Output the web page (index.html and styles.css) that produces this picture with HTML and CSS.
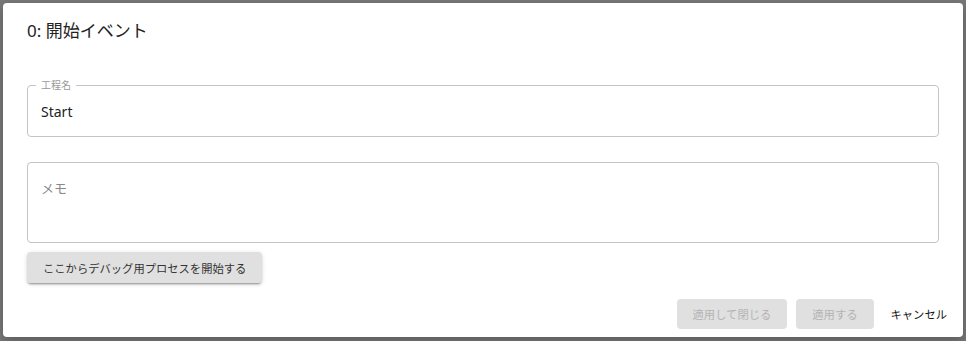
FILE: index.html
```html
<!DOCTYPE html>
<html lang="ja">
<head>
    <meta charset="UTF-8">
    <meta name="viewport" content="width=device-width, initial-scale=1.0">
    <title>開始イベント</title>
    <link rel="stylesheet" href="styles.css">
</head>
<body>
    <div class="backdrop">
        <div class="dialog">
            <h2 class="dialog-title">0: 開始イベント</h2>
            <div class="dialog-content">
                <div class="field">
                    <span class="field-label">工程名</span>
                    <div class="field-value">Start</div>
                </div>
                <div class="field memo">
                    <div class="field-placeholder">メモ</div>
                </div>
                <button class="debug-button">ここからデバッグ用プロセスを開始する</button>
            </div>
            <div class="dialog-actions">
                <button class="action-button" disabled>適用して閉じる</button>
                <button class="action-button" disabled>適用する</button>
                <button class="text-button">キャンセル</button>
            </div>
        </div>
    </div>
</body>
</html>
```

FILE: styles.css
```css
body {
    margin: 0;
    padding: 0;
    font-family: "Noto Sans", "Noto Sans CJK JP", sans-serif;
    background-color: #787878;
}
.backdrop {
    width: 966px;
    height: 341px;
    padding: 3px;
    box-sizing: border-box;
}
.dialog {
    width: 960px;
    height: 334px;
    background-color: white;
    border-radius: 4px;
    box-sizing: border-box;
    display: flex;
    flex-direction: column;
    box-shadow: 0 4px 12px rgba(0, 0, 0, 0.25);
}
.dialog-title {
    margin: 0;
    padding: 16px 24px;
    font-size: 17px;
    line-height: 24px;
    font-weight: normal;
    color: #222;
}
.dialog-content {
    padding: 0 24px;
    display: flex;
    flex-direction: column;
    align-items: flex-start;
}
.field {
    position: relative;
    align-self: stretch;
    margin-top: 26px;
    height: 52px;
    box-sizing: border-box;
    border: 1px solid #c4c4c4;
    border-radius: 4px;
    padding: 0 13px;
    display: flex;
    align-items: center;
}
.field-label {
    position: absolute;
    top: -7px;
    left: 8px;
    padding: 0 5px;
    background-color: white;
    font-size: 10px;
    line-height: 12px;
    color: #999;
}
.field-value {
    font-size: 14px;
    color: #222;
}
.memo {
    margin-top: 25px;
    height: 81px;
    align-items: flex-start;
    padding-top: 15px;
}
.field-placeholder {
    font-size: 13px;
    line-height: 20px;
    color: #888;
}
.debug-button {
    margin-top: 9px;
    height: 31px;
    padding: 0 16px;
    border: none;
    border-radius: 4px;
    background-color: #e0e0e0;
    color: #333;
    font-family: inherit;
    font-size: 11.3px;
    cursor: pointer;
    box-shadow: 0 3px 1px -2px rgba(0, 0, 0, 0.2), 0 2px 2px 0 rgba(0, 0, 0, 0.14), 0 1px 5px 0 rgba(0, 0, 0, 0.12);
}
.dialog-actions {
    margin-top: 16px;
    padding: 0 8px 8px;
    display: flex;
    justify-content: flex-end;
    gap: 9px;
}
.action-button {
    height: 30px;
    padding: 0 16px;
    border: none;
    border-radius: 4px;
    background-color: #e0e0e0;
    color: #b4b4b4;
    font-family: inherit;
    font-size: 11.3px;
}
.text-button {
    height: 30px;
    padding: 0 8px;
    border: none;
    background: none;
    color: #111;
    font-family: inherit;
    font-size: 11.3px;
    cursor: pointer;
}
```
